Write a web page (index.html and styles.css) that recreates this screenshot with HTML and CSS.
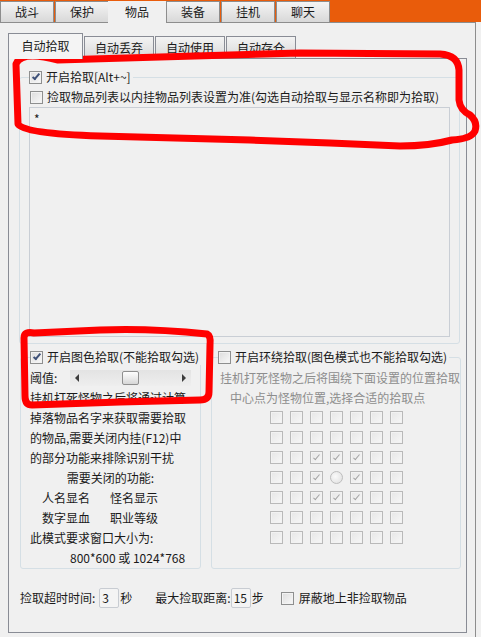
FILE: index.html
```html
<!DOCTYPE html>
<html lang="zh-CN">
<head>
  <meta charset="UTF-8">
  <meta name="viewport" content="width=device-width, initial-scale=1.0">
  <title>物品 - 自动拾取</title>
  <link rel="stylesheet" href="styles.css">
</head>
<body>
  <!-- Main Tabs -->
  <div class="topbar">
    <div class="tab">战斗</div>
    <div class="tab">保护</div>
    <div class="tab active">物品</div>
    <div class="tab">装备</div>
    <div class="tab">挂机</div>
    <div class="tab">聊天</div>
  </div>

  <div class="frame">
    <!-- Sub Tabs -->
    <div class="subtabs">
      <div class="subtab active">自动拾取</div>
      <div class="subtab">自动丢弃</div>
      <div class="subtab">自动使用</div>
      <div class="subtab">自动存仓</div>
    </div>

    <div class="panel">
      <!-- Pick list -->
      <fieldset class="group group-pick">
        <legend><label class="check"><span class="cb checked"></span>开启拾取[Alt+~]</label></legend>
        <label class="check row-list"><span class="cb"></span>捡取物品列表以内挂物品列表设置为准(勾选自动拾取与显示名称即为拾取)</label>
        <div class="listbox">*</div>
      </fieldset>

      <div class="groups">
        <!-- Colour pick -->
        <fieldset class="group group-color">
          <legend><label class="check"><span class="cb checked"></span>开启图色拾取(不能拾取勾选)</label></legend>
          <div class="threshold">
            <span class="threshold-label">阈值:</span>
            <div class="slider">
              <span class="arrow arrow-left"></span>
              <span class="thumb"></span>
              <span class="arrow arrow-right"></span>
            </div>
          </div>
          <p class="line">挂机打死怪物之后将通过计算</p>
          <p class="line">掉落物品名字来获取需要拾取</p>
          <p class="line">的物品,需要关闭内挂(F12)中</p>
          <p class="line">的部分功能来排除识别干扰</p>
          <p class="line center">需要关闭的功能:</p>
          <p class="line features"><span>人名显名</span><span>怪名显示</span></p>
          <p class="line features"><span>数字显血</span><span>职业等级</span></p>
          <p class="line">此模式要求窗口大小为:</p>
          <p class="line size">800*600 或 1024*768</p>
        </fieldset>

        <!-- Pick around -->
        <fieldset class="group group-around">
          <legend><label class="check"><span class="cb"></span>开启环绕拾取(图色模式也不能拾取勾选)</label></legend>
          <p class="line muted">挂机打死怪物之后将围绕下面设置的位置拾取</p>
          <p class="line muted indent">中心点为怪物位置,选择合适的拾取点</p>
          <div class="points">
            <span class="cb off"></span><span class="cb off"></span><span class="cb off"></span><span class="cb off"></span><span class="cb off"></span><span class="cb off"></span><span class="cb off"></span>
            <span class="cb off"></span><span class="cb off"></span><span class="cb off"></span><span class="cb off"></span><span class="cb off"></span><span class="cb off"></span><span class="cb off"></span>
            <span class="cb off"></span><span class="cb off"></span><span class="cb off checked"></span><span class="cb off checked"></span><span class="cb off checked"></span><span class="cb off"></span><span class="cb off"></span>
            <span class="cb off"></span><span class="cb off"></span><span class="cb off checked"></span><span class="radio"></span><span class="cb off checked"></span><span class="cb off"></span><span class="cb off"></span>
            <span class="cb off"></span><span class="cb off"></span><span class="cb off checked"></span><span class="cb off checked"></span><span class="cb off checked"></span><span class="cb off"></span><span class="cb off"></span>
            <span class="cb off"></span><span class="cb off"></span><span class="cb off"></span><span class="cb off"></span><span class="cb off"></span><span class="cb off"></span><span class="cb off"></span>
            <span class="cb off"></span><span class="cb off"></span><span class="cb off"></span><span class="cb off"></span><span class="cb off"></span><span class="cb off"></span><span class="cb off"></span>
          </div>
        </fieldset>
      </div>

      <!-- Bottom options -->
      <div class="options">
        <span>捡取超时时间:</span><span class="field">3</span><span class="unit">秒</span>
        <span class="distance">最大捡取距离:</span><span class="field field-tight">15</span><span class="unit">步</span>
        <label class="check hide-ground"><span class="cb"></span>屏蔽地上非捡取物品</label>
      </div>
    </div>
  </div>

  <!-- Hand-drawn red marks over the screenshot -->
  <svg class="marks" width="481" height="637" viewBox="0 0 481 637">
    <path d="M16 64 C20 54 34 54 58 60 L160 57 L300 53 L440 54 Q458 55 459 70 L459 100 Q460 110 470 115 Q478 122 475 131 Q471 139 452 140 Q430 146 400 146 L330 143 L250 140 L100 136 Q24 134 18 124 Z"/>
    <path d="M24 338 Q24 331 34 333 L100 330 Q150 328 207 334 Q211 336 210 345 L209 392 Q209 400 200 400 L120 402 L32 405 Q25 405 25 396 Z"/>
  </svg>
</body>
</html>
```

FILE: styles.css
```css
/* General Styles */
body {
  position: relative;
  width: 481px;
  height: 637px;
  margin: 0;
  overflow: hidden;
  background-color: #f0f0f0;
  font-family: "Noto Sans CJK SC", "Noto Sans", sans-serif;
  font-size: 12px;
  line-height: 16px;
  color: #1a1a1a;
}

/* Main Tabs */
.topbar {
  display: flex;
  height: 22px;
  padding-top: 1px;
  box-sizing: border-box;
  background-color: #e95c0b;
}

.tab {
  width: 54px;
  height: 21px;
  margin-right: 1px;
  box-sizing: border-box;
  border: 1px solid #8d8d8d;
  border-bottom: none;
  background: linear-gradient(#f4f4f4, #e8e8e8 45%, #d8d8d8);
  text-align: center;
  line-height: 20px;
}

.tab.active {
  position: relative;
  z-index: 1;
  width: 58px;
  height: 22px;
  margin-left: -2px;
  margin-right: 0;
  border: none;
  background: #f0f0f0;
  line-height: 22px;
}

.frame {
  width: 476px;
  height: 615px;
  box-sizing: border-box;
  border-top: 1px solid #8d8d8d;
  border-right: 1px solid #8d8d8d;
}

/* Sub Tabs */
.subtabs {
  display: flex;
  align-items: flex-end;
  height: 25px;
  margin: 10px 0 0 8px;
}

.subtab {
  width: 70px;
  height: 22px;
  margin-left: 1px;
  box-sizing: border-box;
  border: 1px solid #898c95;
  border-bottom: none;
  background: linear-gradient(#f3f3f3, #e6e6e6 50%, #d9d9d9);
  text-align: center;
  line-height: 21px;
}

.subtab.active {
  position: relative;
  z-index: 1;
  width: 75px;
  height: 26px;
  margin: 0 0 -1px 0;
  background: #f4f4f4;
  line-height: 24px;
}

.panel {
  width: 459px;
  height: 575px;
  margin-left: 8px;
  box-sizing: border-box;
  border: 1px solid #898c95;
}

/* Group boxes */
.group {
  min-width: 0;
  margin: 0;
  padding: 4px 9px 6px;
  border: 1px solid #d5dfe5;
  border-radius: 3px;
}

.group legend {
  padding: 0 2px 0 0;
}

.check {
  display: flex;
  align-items: center;
  gap: 4px;
  height: 16px;
  white-space: nowrap;
}

.group-pick {
  margin: 10px 6px 0 10px;
}

.row-list {
  margin-left: 1px;
}

.listbox {
  height: 230px;
  margin-top: 2px;
  padding: 3px 4px;
  box-sizing: border-box;
  border: 1px solid #c9ced5;
}

.groups {
  display: flex;
  gap: 10px;
  margin: 5px 0 0 11px;
}

.group-color {
  width: 181px;
  box-sizing: border-box;
  padding: 3px 9px 0;
}

.group-around {
  width: 250px;
  box-sizing: border-box;
  padding: 3px 8px 0;
}

.group-around legend {
  margin-left: -2px;
}

.line {
  margin: 0;
  line-height: 20px;
  white-space: nowrap;
}

.center {
  text-align: center;
}

.features {
  display: flex;
  padding-left: 12px;
}

.features span {
  width: 68px;
}

.size {
  padding-left: 40px;
}

.muted {
  color: #8d8d8d;
}

.indent {
  padding-left: 10px;
}

/* Checkboxes */
.cb {
  display: flex;
  align-items: center;
  justify-content: center;
  flex: none;
  width: 13px;
  height: 13px;
  box-sizing: border-box;
  border: 1px solid #8e8f8f;
  background: linear-gradient(135deg, #dcdcdc, #f9f9f9);
  box-shadow: inset 0 0 0 1px #f2f2f2;
}

.cb.checked::after {
  content: "";
  width: 2px;
  height: 6px;
  margin-top: -2px;
  border: solid #3f5178;
  border-width: 0 2px 2px 0;
  transform: rotate(40deg);
}

.cb.off {
  border-color: #b9b9b9;
  background: linear-gradient(135deg, #e6e6e6, #f7f7f7);
}

.cb.off.checked::after {
  border-color: #a3a3a3;
  border-width: 0 1.5px 1.5px 0;
}

.radio {
  width: 13px;
  height: 13px;
  box-sizing: border-box;
  border: 1px solid #bdbdbd;
  border-radius: 50%;
  background: radial-gradient(circle at 40% 40%, #fafafa, #dedede);
}

/* Threshold slider */
.threshold {
  display: flex;
  align-items: center;
  height: 20px;
}

.threshold-label {
  width: 40px;
}

.slider {
  display: flex;
  align-items: center;
  justify-content: space-between;
  width: 121px;
  height: 16px;
  padding: 0 5px;
  box-sizing: border-box;
  background: linear-gradient(#e3e3e3, #eeeeee);
}

.arrow {
  width: 0;
  height: 0;
  border-style: solid;
  border-color: transparent;
}

.arrow-left {
  border-width: 4px 4px 4px 0;
  border-right-color: #3c3c3c;
}

.arrow-right {
  border-width: 4px 0 4px 4px;
  border-left-color: #3c3c3c;
}

.thumb {
  width: 17px;
  height: 14px;
  box-sizing: border-box;
  border: 1px solid #8f8f8f;
  border-radius: 2px;
  background: linear-gradient(#fdfdfd, #ebebeb 50%, #d6d6d6);
}

/* Pick points grid */
.points {
  display: grid;
  grid-template-columns: repeat(7, 13px);
  grid-auto-rows: 13px;
  gap: 7px;
  justify-content: center;
  margin-top: 3px;
}

/* Bottom options */
.options {
  display: flex;
  align-items: center;
  height: 20px;
  margin: 19px 0 0 11px;
  white-space: nowrap;
}

.field {
  width: 20px;
  height: 20px;
  margin-left: 4px;
  padding: 0 2px;
  box-sizing: border-box;
  border: 1px solid #c8ccd2;
  border-radius: 2px;
  background: #f4f4f4;
  line-height: 18px;
}

.field-tight {
  margin-left: 0;
}

.unit {
  margin-left: 1px;
}

.distance {
  margin-left: 23px;
}

.hide-ground {
  margin-left: 17px;
  gap: 5px;
}

/* Red marks */
.marks {
  position: absolute;
  top: 0;
  left: 0;
  pointer-events: none;
}

.marks path {
  fill: none;
  stroke: #ff0000;
  stroke-width: 7;
  stroke-linejoin: round;
  stroke-linecap: round;
}
```
